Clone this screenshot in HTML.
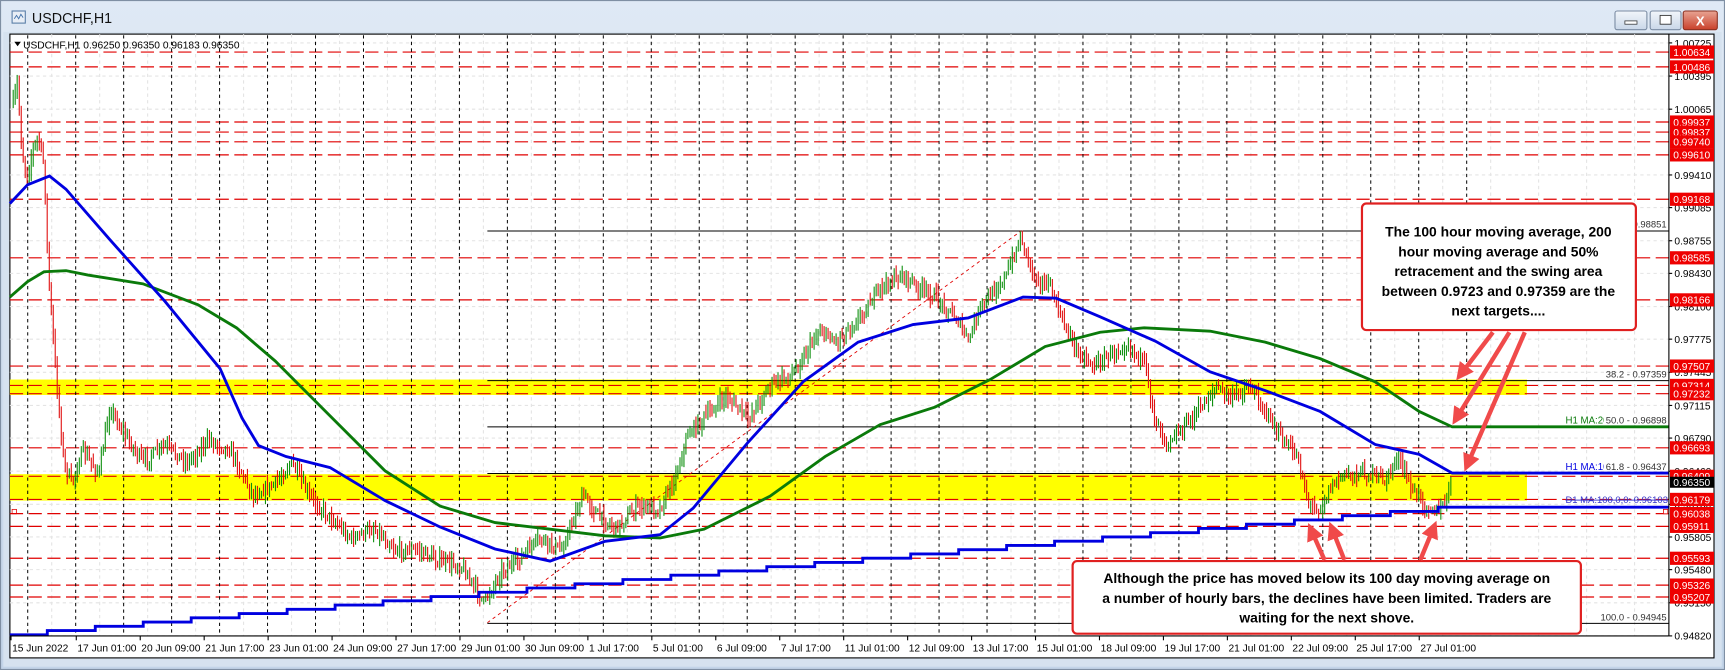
<!DOCTYPE html>
<html><head><meta charset="utf-8">
<style>
html,body{margin:0;padding:0;width:1725px;height:670px;overflow:hidden;background:#c9d8ea;}
svg{display:block}
text{font-family:"Liberation Sans",sans-serif}
</style></head>
<body>
<svg id="s" width="1725" height="670" viewBox="0 0 1568 609" preserveAspectRatio="none" xmlns="http://www.w3.org/2000/svg">
<defs>
<linearGradient id="tb" x1="0" y1="0" x2="0" y2="1"><stop offset="0" stop-color="#dfe9f5"/><stop offset="1" stop-color="#c3d4e8"/></linearGradient>
<linearGradient id="cl" x1="0" y1="0" x2="0" y2="1"><stop offset="0" stop-color="#e8a493"/><stop offset="1" stop-color="#c9402a"/></linearGradient>
<linearGradient id="bt" x1="0" y1="0" x2="0" y2="1"><stop offset="0" stop-color="#f2f6fb"/><stop offset="1" stop-color="#c9d7e8"/></linearGradient>
<marker id="ah" markerWidth="4" markerHeight="4" refX="2.2" refY="2" orient="auto" markerUnits="strokeWidth"><path d="M0,0 L4,2 L0,4 Z" fill="#f04a4a"/></marker>
</defs>
<rect x="0" y="0" width="1568" height="609" fill="#c9d8ea"/>
<rect x="0.5" y="0.5" width="1567" height="608" fill="url(#tb)" stroke="#7f8fa3"/>
<rect x="3" y="29" width="1562" height="577" fill="#d6e2ef"/>
<rect x="11" y="10" width="12" height="11" fill="#e8eef6" stroke="#5b7fa8"/>
<path d="M13,17 l2,-3 l2,3 l2,-4 l2,3" stroke="#3d6ea8" fill="none" stroke-width="0.8"/>
<text x="29" y="21" font-size="13" fill="#111">USDCHF,H1</text>
<rect x="1468" y="10" width="29" height="17" rx="2" fill="url(#bt)" stroke="#7b8ca3"/>
<rect x="1477" y="19" width="11" height="3" fill="#fff" stroke="#333" stroke-width="0.7"/>
<rect x="1500" y="10" width="28" height="17" rx="2" fill="url(#bt)" stroke="#7b8ca3"/>
<rect x="1509" y="14" width="10" height="8" fill="#fff" stroke="#333" stroke-width="0.8"/>
<rect x="1530" y="10" width="31" height="17" rx="2" fill="url(#cl)" stroke="#8a3020"/>
<text x="1545.5" y="23" font-size="12" font-weight="bold" fill="#fff" text-anchor="middle">X</text>
<rect x="9" y="31" width="1549" height="567" fill="#fff" stroke="#000" stroke-width="1"/>
<g id="grid"></g>
<g id="bands">
<rect x="9" y="345" width="1379" height="14" fill="#ffff00"/>
<rect x="9" y="431" width="1379" height="24" fill="#ffff00"/>
</g>
<g id="reds" stroke="#e00000" stroke-width="1.1" stroke-dasharray="12,5"></g>
<g id="vdash" stroke="#000" stroke-width="0.9" stroke-dasharray="3,3"></g>
<g id="fib" stroke="#000" stroke-width="0.9">
<line x1="443" y1="210" x2="1517" y2="210"/>
<line x1="443" y1="346" x2="1517" y2="346"/>
<line x1="443" y1="388" x2="1517" y2="388"/>
<line x1="443" y1="430.4" x2="1517" y2="430.4"/>
<line x1="443" y1="566.6" x2="1517" y2="566.6"/>
</g>
<line x1="443" y1="566" x2="928" y2="210" stroke="#e00000" stroke-width="0.8" stroke-dasharray="3,3"/>
<g id="candles" stroke-width="1"></g>
<polyline id="d1" fill="none" stroke="#0000e0" stroke-width="2.6"/>
<polyline fill="none" stroke="#0a7a0a" stroke-width="2.6" points="9,270 25,256 40,247 60,246 80,250 130,258 180,277 215,298 250,328 300,378 350,428 400,460 450,475 500,481 550,487 600,489 640,481 700,451 750,415 800,386 850,370 900,345 950,315 1000,302 1040,298 1100,301 1150,311 1200,326 1250,347 1290,374 1320,388 1517,388"/>
<polyline fill="none" stroke="#0000e0" stroke-width="2.6" points="9,185 25,168 45,160 60,172 100,218 150,274 200,335 220,380 235,405 260,415 300,425 350,455 400,479 450,499 500,510 550,492 600,486 630,462 680,402 730,347 780,311 830,295 880,289 930,270 960,271 1000,288 1050,310 1100,338 1150,355 1200,374 1250,404 1290,413 1320,430 1517,430"/>
<line x1="1517" y1="31" x2="1517" y2="578" stroke="#000"/>
<line x1="9" y1="578" x2="1517" y2="578" stroke="#000"/>
<g id="ylab" font-size="9.3"></g>
<g id="xlab" font-size="9.3" fill="#000"></g>
<text x="21" y="44" font-size="9.3" fill="#000">USDCHF,H1  0.96250 0.96350 0.96183 0.96350</text>
<path d="M13,38 l6,0 l-3,4 z" fill="#000"/>
<rect x="1422" y="376" width="40" height="10" fill="#fff"/>
<rect x="1422" y="418" width="40" height="10" fill="#fff"/>
<text x="1423" y="385" font-size="8.8" fill="#0a7a0a">H1 MA:20</text>
<text x="1423" y="427" font-size="8.8" fill="#0000e0">H1 MA:10</text>
<rect x="1458" y="376" width="58" height="10" fill="#fff"/>
<rect x="1458" y="418" width="58" height="10" fill="#fff"/>
<g font-size="8.6" fill="#333" text-anchor="end">
<text x="1515" y="207">0.98851</text>
<text x="1515" y="343">38.2 - 0.97359</text>
<text x="1515" y="385">50.0 - 0.96898</text>
<text x="1515" y="427">61.8 - 0.96437</text>
<text x="1515" y="564">100.0 - 0.94945</text>
</g>
<text x="1423" y="457" font-size="8.6" fill="#3333cc" text-decoration="line-through">D1 MA:100,0,0: 0.96103</text>
<rect x="11" y="463" width="4" height="4" fill="none" stroke="#e00000" stroke-width="0.7"/>
<rect x="1512" y="463" width="4" height="4" fill="#fff" stroke="#e00000" stroke-width="0.7"/>
<rect x="1238" y="185" width="249" height="115" rx="4" fill="#fff" stroke="#e02020" stroke-width="2"/>
<g font-size="12.6" font-weight="bold" text-anchor="middle" fill="#000">
<text x="1362" y="215">The 100 hour moving average, 200</text>
<text x="1362" y="233">hour moving average and 50%</text>
<text x="1362" y="251">retracement and the swing area</text>
<text x="1362" y="269">between 0.9723 and 0.97359 are the</text>
<text x="1362" y="287">next targets....</text>
</g>
<rect x="975" y="510" width="462" height="66" rx="4" fill="#fff" stroke="#e02020" stroke-width="2"/>
<g font-size="12.6" font-weight="bold" text-anchor="middle" fill="#000">
<text x="1206" y="530">Although the price has moved below its 100 day moving average  on</text>
<text x="1206" y="548">a number of hourly bars, the declines have been limited. Traders are</text>
<text x="1206" y="566">waiting for the next shove.</text>
</g>
<g stroke="#f04a4a" stroke-width="4" fill="none" marker-end="url(#ah)">
<line x1="1357" y1="302" x2="1328" y2="340"/>
<line x1="1372" y1="302" x2="1324" y2="380"/>
<line x1="1386" y1="302" x2="1334" y2="422"/>
<line x1="1204" y1="509" x2="1192" y2="482"/>
<line x1="1222" y1="509" x2="1211" y2="481"/>
<line x1="1291" y1="509" x2="1303" y2="480"/>
</g>
</svg>
<script>
(function(){
var NS="http://www.w3.org/2000/svg";
function el(p,t,a,txt){var e=document.createElementNS(NS,t);for(var k in a)e.setAttribute(k,a[k]);if(txt!==undefined)e.textContent=txt;document.getElementById(p).appendChild(e);return e;}
function Y(p){return 39+(1.00725-p)*9128;}
var gray=[1.00725,1.00395,1.00065,0.99410,0.99085,0.98755,0.98430,0.98100,0.97775,0.97445,0.97115,0.96790,0.96460,0.96130,0.95805,0.95480,0.95150,0.94820];
gray.forEach(function(p){var y=Y(p);el('grid','line',{x1:9,y1:y,x2:1517,y2:y,stroke:'#e4e4e4','stroke-dasharray':'3,3'});
el('ylab','line',{x1:1517,y1:y,x2:1520,y2:y,stroke:'#000'});
el('ylab','text',{x:1522,y:y+3.5,fill:'#000'},p.toFixed(5));});
for(var x=25.2+21.8;x<1517;x+=43.6){el('grid','line',{x1:x,y1:31,x2:x,y2:578,stroke:'#e4e4e4','stroke-dasharray':'3,3'});}
var reds=[1.00634,1.00486,0.99937,0.99837,0.99740,0.99610,0.99168,0.98585,0.98166,0.97507,0.97314,0.97232,0.96693,0.96409,0.96179,0.96038,0.95911,0.95593,0.95326,0.95207];
reds.forEach(function(p){var y=Y(p);el('reds','line',{x1:9,y1:y,x2:1517,y2:y});
el('ylab','rect',{x:1518,y:y-6,width:40,height:12,fill:'#ee0000'});
el('ylab','text',{x:1521,y:y+3.5,fill:'#fff'},p.toFixed(5));});
var yb=Y(0.96350);el('ylab','rect',{x:1518,y:yb-5,width:40,height:10,fill:'#000'});
el('ylab','text',{x:1521,y:yb+3.5,fill:'#fff'},'0.96350');
for(var k=0;k<=30;k++){var x=25.2+43.6*k;el('vdash','line',{x1:x,y1:32,x2:x,y2:578});}
var labs=["15 Jun 2022","17 Jun 01:00","20 Jun 09:00","21 Jun 17:00","23 Jun 01:00","24 Jun 09:00","27 Jun 17:00","29 Jun 01:00","30 Jun 09:00","1 Jul 17:00","5 Jul 01:00","6 Jul 09:00","7 Jul 17:00","11 Jul 01:00","12 Jul 09:00","13 Jul 17:00","15 Jul 01:00","18 Jul 09:00","19 Jul 17:00","21 Jul 01:00","22 Jul 09:00","25 Jul 17:00","27 Jul 01:00"];
labs.forEach(function(l,i){var x=i==0?10:(11.2+58.13*i);el('xlab','line',{x1:x,y1:578,x2:x,y2:582,stroke:'#000'});el('xlab','text',{x:x+1,y:592},l);});
var pts=[];var y=577;pts.push("9,577");for(var i=0;i<30;i++){var x=25+43.6*i+18;pts.push(x+","+y);y-= (577-461)/30;pts.push(x+","+y);}pts.push("1320,461");pts.push("1517,461");
document.getElementById('d1').setAttribute('points',pts.join(' '));
var P=[[12,95],[16,75],[20,140],[25,160],[30,135],[35,125],[40,150],[44,250],[50,330],[58,420],[65,440],[75,410],[90,430],[100,370],[110,390],[130,420],[150,405],[170,420],[190,400],[210,410],[230,450],[250,440],[265,420],[280,450],[300,470],[320,490],[340,480],[360,500],[380,500],[400,510],[420,515],[440,548],[455,520],[470,510],[490,490],[510,500],[530,450],[545,470],[560,480],[580,460],[600,462],[615,430],[625,395],[640,380],[660,360],[680,380],[700,350],[720,340],[745,300],[760,310],[780,290],[800,262],[820,250],[835,262],[850,270],[870,290],[880,310],[890,282],[905,262],[915,250],[928,215],[940,250],[955,262],[965,290],[980,320],[995,332],[1010,322],[1025,312],[1040,330],[1050,380],[1060,400],[1075,390],[1090,372],[1105,352],[1120,362],[1135,350],[1150,372],[1165,400],[1180,415],[1190,460],[1200,462],[1210,442],[1220,432],[1240,430],[1260,436],[1270,415],[1285,448],[1300,462],[1310,464],[1320,440]];
function interp(x){for(var i=1;i<P.length;i++){if(x<=P[i][0]){var a=P[i-1],b=P[i];return a[1]+(b[1]-a[1])*(x-a[0])/(b[0]-a[0]);}}return P[P.length-1][1];}
var seed=7;function rnd(){seed=(seed*16807)%2147483647;return seed/2147483647;}
var prev=interp(12);var g=document.getElementById('candles');
for(var x=12;x<=1320;x+=1.82){var c=interp(x)+(rnd()-0.5)*10;var o=prev;var hi=Math.min(o,c)-rnd()*8-1;var lo=Math.max(o,c)+rnd()*8+1;
var e=document.createElementNS(NS,'line');e.setAttribute('x1',x.toFixed(1));e.setAttribute('x2',x.toFixed(1));e.setAttribute('y1',hi.toFixed(1));e.setAttribute('y2',lo.toFixed(1));e.setAttribute('stroke',c<o?'#109010':'#e01010');g.appendChild(e);prev=c;}
})();
</script>
</body></html>
